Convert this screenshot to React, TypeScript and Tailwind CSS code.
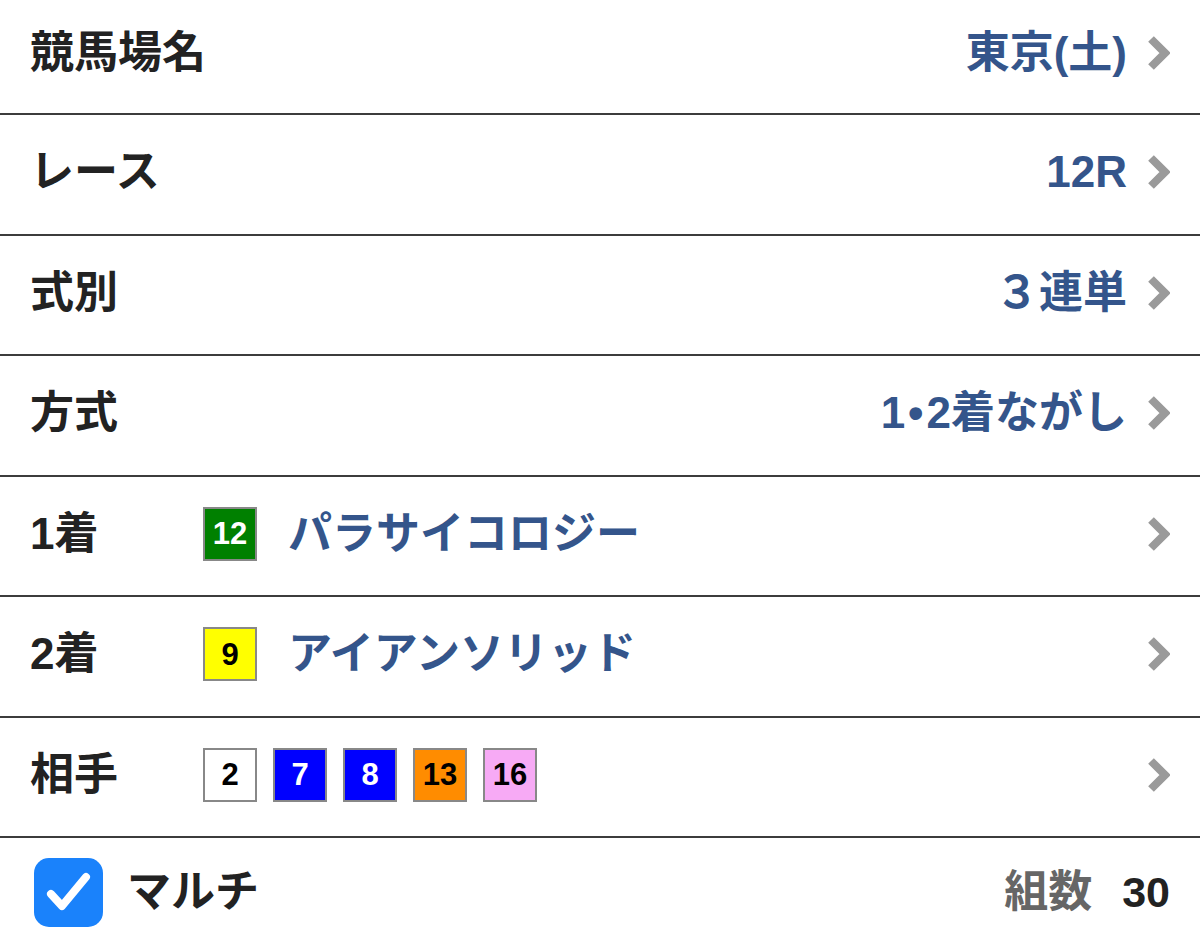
import React from "react";

const FONT = "font-['Liberation_Sans','Noto_Sans_CJK_JP',sans-serif]";

function Chevron() {
  return (
    <svg width="24" height="36" viewBox="0 0 24 36" className="shrink-0">
      <polyline
        points="5,4 19,18 5,32"
        fill="none"
        stroke="#9a9a9a"
        strokeWidth="8"
        strokeLinejoin="miter"
      />
    </svg>
  );
}

type Horse = { n: number; bg: string; fg: string };

const HORSES: Record<number, Horse> = {
  2: { n: 2, bg: "bg-white", fg: "text-black" },
  7: { n: 7, bg: "bg-[#0000ff]", fg: "text-white" },
  8: { n: 8, bg: "bg-[#0000ff]", fg: "text-white" },
  9: { n: 9, bg: "bg-[#ffff00]", fg: "text-black" },
  12: { n: 12, bg: "bg-[#008000]", fg: "text-white" },
  13: { n: 13, bg: "bg-[#ff8c00]", fg: "text-black" },
  16: { n: 16, bg: "bg-[#f7aaf5]", fg: "text-black" },
};

function NumBox({ n }: { n: number }) {
  const h = HORSES[n];
  return (
    <div
      className={`flex h-[54px] w-[54px] shrink-0 items-center justify-center border-2 border-[#888888] ${h.bg} ${h.fg} text-[31px] font-bold leading-none`}
    >
      {h.n}
    </div>
  );
}

function Row({
  label,
  value,
  first,
  children,
}: {
  label: string;
  value?: React.ReactNode;
  first?: boolean;
  children?: React.ReactNode;
}) {
  return (
    <div
      className={`flex items-center border-b-2 border-[#3c3c3c] pl-[30px] pr-[30px] ${
        first ? "h-[115px] pb-[8px]" : "h-[120.5px] pb-[4px]"
      }`}
    >
      <div className="w-[173px] shrink-0 whitespace-nowrap text-[44px] font-bold leading-none text-[#222222]">
        {label}
      </div>
      {children}
      <div className="ml-auto flex items-center gap-[19px]">
        {value && (
          <span className="whitespace-nowrap text-[44px] font-bold leading-none text-[#34558b]">
            {value}
          </span>
        )}
        <Chevron />
      </div>
    </div>
  );
}

export default function App() {
  return (
    <div className={`h-[952px] w-[1200px] overflow-hidden bg-white ${FONT}`}>
      <Row label="競馬場名" value="東京(土)" first />
      <Row label="レース" value="12R" />
      <Row label="式別" value="３連単" />
      <Row
        label="方式"
        value={
          <>
            1<span className="mx-[3px]">•</span>2着ながし
          </>
        }
      />
      <Row label="1着">
        <div className="flex items-center gap-[31px]">
          <NumBox n={12} />
          <span className="whitespace-nowrap text-[44px] font-bold leading-none text-[#34558b]">
            パラサイコロジー
          </span>
        </div>
      </Row>
      <Row label="2着">
        <div className="flex items-center gap-[31px]">
          <NumBox n={9} />
          <span className="whitespace-nowrap text-[44px] font-bold leading-none text-[#34558b]">
            アイアンソリッド
          </span>
        </div>
      </Row>
      <Row label="相手">
        <div className="flex items-center gap-[16px]">
          {[2, 7, 8, 13, 16].map((n) => (
            <NumBox key={n} n={n} />
          ))}
        </div>
      </Row>
      <div className="flex h-[114px] items-center pl-[34px] pr-[30px] pb-[6px]">
        <div className="flex h-[69px] w-[69px] items-center justify-center rounded-[15px] bg-[#1a82fb]">
          <svg width="48" height="42" viewBox="0 0 48 42">
            <polyline
              points="6,23 17,35 41,6"
              fill="none"
              stroke="white"
              strokeWidth="8"
              strokeLinecap="round"
              strokeLinejoin="round"
            />
          </svg>
        </div>
        <span className="ml-[24px] text-[44px] font-bold leading-none text-[#222222]">
          マルチ
        </span>
        <div className="ml-auto flex items-center gap-[30px]">
          <span className="text-[44px] font-bold leading-none text-[#666666]">組数</span>
          <span className="text-[43px] font-bold leading-none text-[#222222]">30</span>
        </div>
      </div>
    </div>
  );
}
